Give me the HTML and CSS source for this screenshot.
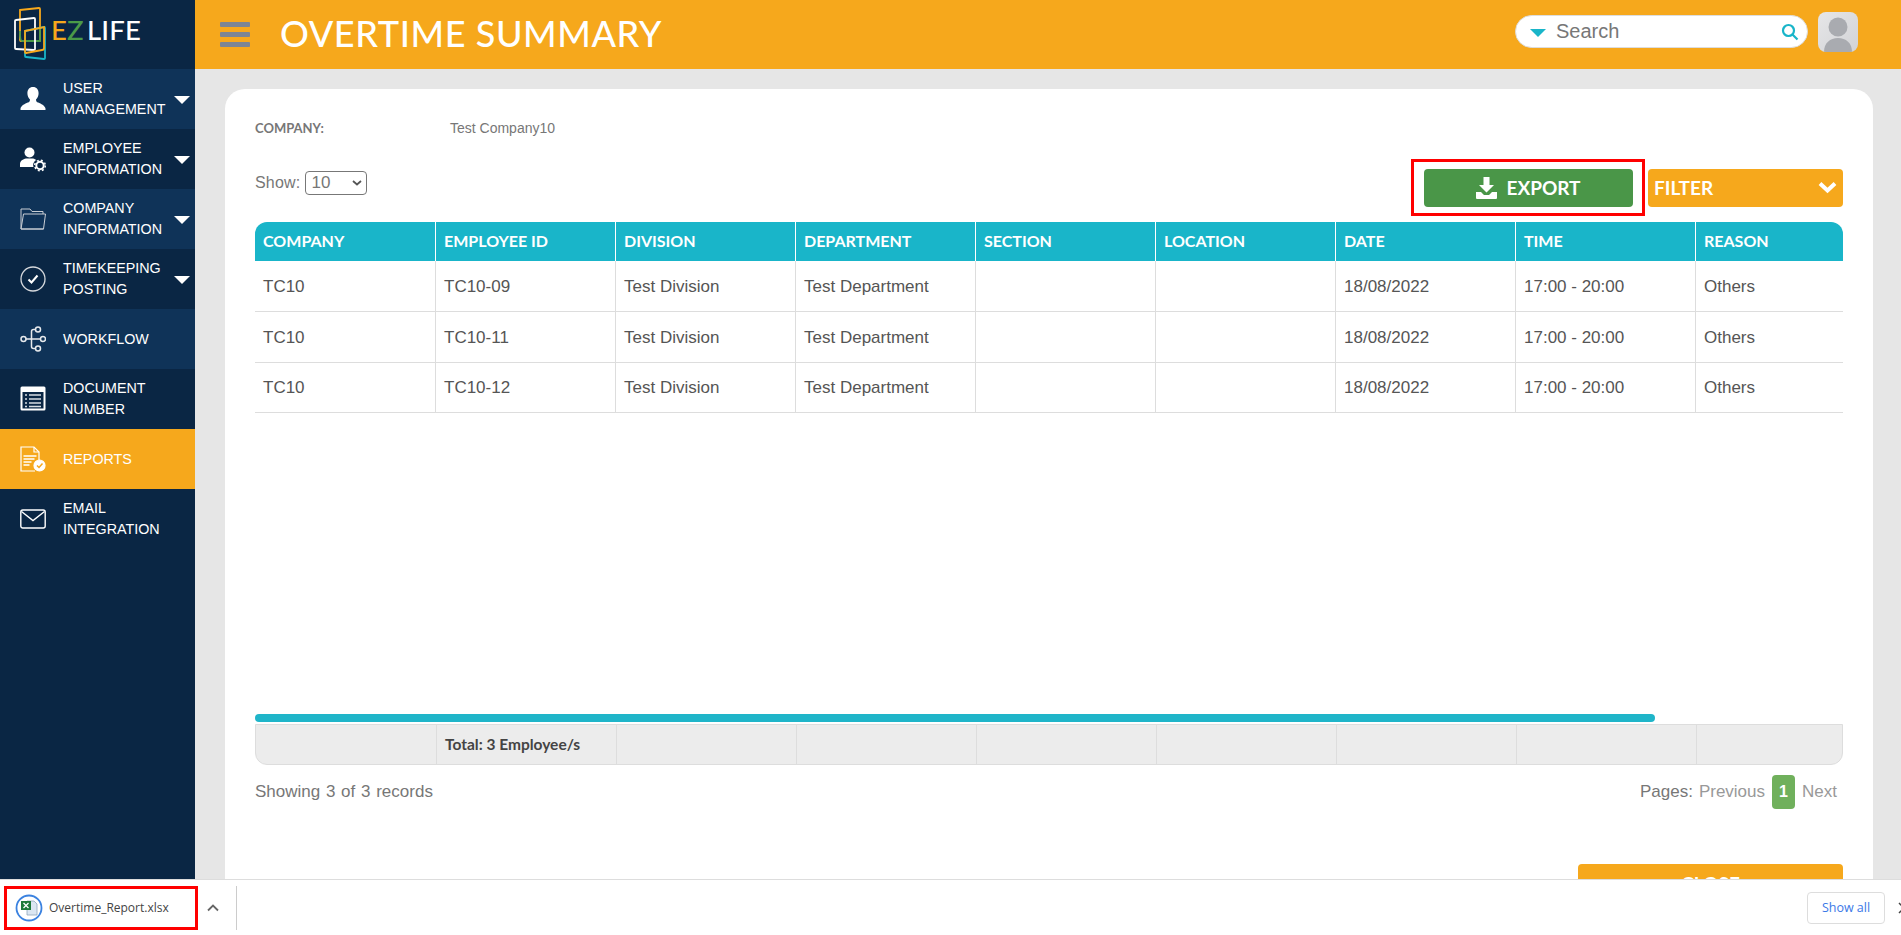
FILE: index.html
```html
<!DOCTYPE html>
<html lang="en">
<head>
  <meta charset="UTF-8" />
  <title>Overtime Summary</title>
  <link rel="stylesheet" href="styles.css">
</head>
<body>
  <div class="app">
    <aside class="sidebar">
      <div class="logo">
        <svg class="logo-mark" width="34" height="56" viewBox="0 0 34 56" fill="none" stroke-width="1.800">
          <path d="M6 3 L25 1 Q26 1 26 2 L26 33 Q26 34 25 34 L7 34 Q6 34 6 33 Z" stroke="#f6a81c"/>
          <path d="M6 24 Q6 34 8 34 L26 34 L26 22" stroke="#4a9a48"/>
          <path d="M11 24 L30 20 Q31 20 31 21 L31 51 Q31 52 30 52 L12 50 Q11 50 11 49 Z" stroke="#19b5c9"/>
          <path d="M1 14 Q1 13 2 13 L20 11 Q21 11 21 12 L21 42 Q21 43 20 43 L2 42 Q1 42 1 41 Z" stroke="#fff"/>
          <path d="M11 24 L30 20 L30 41 Q30 43 28 43 L12 46 Q11 46 11 45 Z" stroke="#f6a81c"/>
        </svg>
        <span class="logo-text"><span class="ez-e">E</span><span class="ez-z">Z</span>LIFE</span>
      </div>
      <nav class="menu">
        <a class="menu-item alt">
          <svg class="menu-icon" viewBox="0 0 26 26" fill="#fff"><path d="M13 1c-3.600 0-5.600 2.700-5.600 6.200 0 2.600 1 4.800 2.600 6.200 0 1.600-.6 2.500-2.200 3.200C4.800 18 1.400 19.500.5 22.500V24h25v-1.500c-.9-3-4.300-4.500-7.300-5.900-1.600-.7-2.200-1.600-2.200-3.200 1.600-1.400 2.600-3.600 2.600-6.200C18.600 3.700 16.600 1 13 1z"/></svg>
          <span class="menu-label">USER MANAGEMENT</span><i class="caret"></i>
        </a>
        <a class="menu-item">
          <svg class="menu-icon" viewBox="0 0 26 26" fill="#fff"><circle cx="9.500" cy="6.500" r="5"/><path d="M0 21v-3c0-3 3-5 6-5.500h7c1.500.3 2.500 1 3 1.500-2.500 1.500-3.500 4.500-2.500 7H1.500Q0 21 0 21z"/><circle cx="20" cy="19.500" r="3.700" fill="none" stroke="#fff" stroke-width="2"/><circle cx="20" cy="19.500" r="5.300" fill="none" stroke="#fff" stroke-width="1.500" stroke-dasharray="2 2.200"/></svg>
          <span class="menu-label">EMPLOYEE INFORMATION</span><i class="caret"></i>
        </a>
        <a class="menu-item alt">
          <svg class="menu-icon" viewBox="0 0 26 26" fill="none" stroke="#c9ced4" stroke-width="1"><path d="M1 23V3h9l2 2.500h11V8"/><path d="M1 23L3.500 8H25.500L23.500 23Z"/><path d="M1 23h22.500"/></svg>
          <span class="menu-label">COMPANY INFORMATION</span><i class="caret"></i>
        </a>
        <a class="menu-item">
          <svg class="menu-icon" viewBox="0 0 26 26" fill="none" stroke="#d5d8dc"><circle cx="13" cy="13" r="12" stroke-width="1.300"/><path d="M8.500 13.500l3 3 6-7" stroke="#fff" stroke-width="2"/></svg>
          <span class="menu-label">TIMEKEEPING POSTING</span><i class="caret"></i>
        </a>
        <a class="menu-item alt">
          <svg class="menu-icon" viewBox="0 0 26 26" fill="none" stroke="#e6e9ec" stroke-width="1.500"><circle cx="3.500" cy="13" r="2.500"/><circle cx="18" cy="3.500" r="2.500"/><circle cx="23" cy="13" r="2.500"/><circle cx="18" cy="22.500" r="2.500"/><path d="M6 13h14.500M15.500 3.500h-2q-2 0-2 2v15q0 2 2 2h2"/></svg>
          <span class="menu-label">WORKFLOW</span>
        </a>
        <a class="menu-item">
          <svg class="menu-icon" viewBox="0 0 26 26"><rect x=".5" y=".5" width="25" height="24" rx="1.500" fill="#fff"/><rect x="2.500" y="6" width="21" height="16.500" fill="#0a2644"/><path d="M5 9h2M9 9h12M5 13h2M9 13h12M5 17h2M9 17h12M5 20.500h2M9 20.500h12" stroke="#d8dde2" stroke-width="1.600"/></svg>
          <span class="menu-label">DOCUMENT NUMBER</span>
        </a>
        <a class="menu-item active">
          <svg class="menu-icon" viewBox="0 0 26 26" fill="none" stroke="#fff" stroke-width="1.200"><path d="M15 25H1V1h13l5 5v8"/><path d="M14 1v5h5"/><path d="M3.500 10h13M3.500 13h11M3.500 16h8M3.500 19h6" stroke-width="1.300"/><circle cx="19.500" cy="19.500" r="5.500" fill="#fff"/><path d="M17 19.500l2 2 3.500-4" stroke="#f6a81c" stroke-width="1.500"/></svg>
          <span class="menu-label">REPORTS</span>
        </a>
        <a class="menu-item">
          <svg class="menu-icon" viewBox="0 0 26 26" fill="none" stroke="#fff" stroke-width="1.400"><rect x=".8" y="4" width="24.400" height="18" rx="2"/><path d="M1.500 5.500L13 14.500L24.500 5.500"/></svg>
          <span class="menu-label">EMAIL INTEGRATION</span>
        </a>
      </nav>
    </aside>

    <div class="content">
      <header class="topbar">
        <div class="burger"><span></span><span></span><span></span></div>
        <h1 class="page-title">OVERTIME SUMMARY</h1>
        <div class="search">
          <i class="search-caret"></i>
          <span class="search-text">Search</span>
          <svg class="search-icon" width="18" height="18" viewBox="0 0 18 18" fill="none" stroke="#19b5c9"><circle cx="7.500" cy="7.500" r="5.500" stroke-width="2.200"/><path d="M11.500 11.500l5 5" stroke-width="2.200"/></svg>
        </div>
        <div class="avatar">
          <svg width="40" height="40" viewBox="0 0 40 40" fill="#a9abb0"><circle cx="20" cy="15" r="9.500"/><path d="M6 40c0-9 6-14 14-14s14 5 14 14z"/></svg>
        </div>
      </header>

      <main class="main">
        <section class="card">
          <div class="company-row">
            <span class="company-label">COMPANY:</span>
            <span class="company-value">Test Company10</span>
          </div>

          <div class="toolbar">
            <div class="show">
              Show:
              <span class="select">10
                <svg width="10" height="6" viewBox="0 0 10 6" fill="none" stroke="#555" stroke-width="1.800"><path d="M1 1l4 3.500L9 1"/></svg>
              </span>
            </div>
            <div class="export-mark">
              <button class="btn-export">
                <svg width="21" height="22" viewBox="0 0 21 22" fill="#fff"><path d="M7.500 0h6v8h4.500l-7.500 7.500L3 8h4.500z"/><path d="M0 15h5l3 3h5l3-3h5v6q0 1-1 1H1q-1 0-1-1z"/></svg>
                EXPORT
              </button>
            </div>
            <button class="btn-filter">
              FILTER
              <svg width="19" height="13" viewBox="0 0 19 13" fill="none" stroke="#fff" stroke-width="4"><path d="M2 2.500l7.500 7 7.500-7"/></svg>
            </button>
          </div>

          <div class="table-wrap">
            <table class="report">
              <thead>
                <tr>
                  <th>COMPANY</th><th>EMPLOYEE ID</th><th>DIVISION</th><th>DEPARTMENT</th><th>SECTION</th><th>LOCATION</th><th>DATE</th><th>TIME</th><th>REASON</th>
                </tr>
              </thead>
              <tbody>
                <tr><td>TC10</td><td>TC10-09</td><td>Test Division</td><td>Test Department</td><td></td><td></td><td>18/08/2022</td><td>17:00 - 20:00</td><td>Others</td></tr>
                <tr><td>TC10</td><td>TC10-11</td><td>Test Division</td><td>Test Department</td><td></td><td></td><td>18/08/2022</td><td>17:00 - 20:00</td><td>Others</td></tr>
                <tr class="last-row"><td>TC10</td><td>TC10-12</td><td>Test Division</td><td>Test Department</td><td></td><td></td><td>18/08/2022</td><td>17:00 - 20:00</td><td>Others</td></tr>
              </tbody>
            </table>
          </div>

          <div class="scrollbar"></div>

          <div class="totals">
            <div></div><div class="total-text">Total: 3 Employee/s</div><div></div><div></div><div></div><div></div><div></div><div></div><div></div>
          </div>

          <div class="pager-row">
            <span class="records">Showing 3 of 3 records</span>
            <div class="pager">
              <span class="pages">Pages:</span>
              <span class="page-link">Previous</span>
              <span class="page-num">1</span>
              <span class="page-link">Next</span>
            </div>
          </div>

          <div class="close-row"><button class="btn-close">CLOSE</button></div>
        </section>
      </main>
    </div>
  </div>

  <footer class="downloads">
    <div class="download-mark">
      <span class="file-icon">
        <svg width="28" height="28" viewBox="0 0 28 28" fill="none"><circle cx="14" cy="14" r="12.500" stroke="#3b82e0" stroke-width="1.800"/><path d="M12 7h7l3 3v11H12z" fill="#dbe6f2" stroke="#8fa6bd" stroke-width=".8"/><rect x="6" y="7" width="10" height="9" fill="#1e7a3a"/><path d="M8.500 9l5 5M13.500 9l-5 5" stroke="#fff" stroke-width="1.300"/></svg>
      </span>
      <span class="file-name">Overtime_Report.xlsx</span>
    </div>
    <svg class="chevron" width="12" height="8" viewBox="0 0 12 8" fill="none" stroke="#666" stroke-width="1.800"><path d="M1 6.500l5-5 5 5"/></svg>
    <span class="divider"></span>
    <span class="spacer"></span>
    <button class="show-all">Show all</button>
    <svg class="close-x" width="12" height="12" viewBox="0 0 12 12" fill="none" stroke="#444" stroke-width="1.500"><path d="M1 1l10 10M11 1L1 11"/></svg>
  </footer>
</body>
</html>
```

FILE: styles.css
```css
* {
  margin: 0;
  padding: 0;
  box-sizing: border-box;
}

html, body {
  height: 100%;
  overflow: hidden;
}

body {
  display: flex;
  flex-direction: column;
  font-family: "Liberation Sans", Arial, sans-serif;
  color: #555;
  background-color: #fff;
}

button {
  border: none;
  cursor: pointer;
}

.app {
  flex: 1;
  min-height: 0;
  display: flex;
  overflow: hidden;
}

/* sidebar */
.sidebar {
  width: 195px;
  flex-shrink: 0;
  background-color: #0a2644;
}

.logo {
  height: 69px;
  display: flex;
  align-items: center;
  padding-left: 14px;
}

.logo-text {
  font-family: Lato, sans-serif;
  font-size: 27.5px;
  font-weight: 500;
  color: #fff;
  margin-left: 3px;
  margin-top: -10px;
  letter-spacing: .2px;
}

.ez-e { color: #f6a81c; }
.ez-z { color: #4a9a48; margin-right: 3px; }

.menu-item {
  height: 60px;
  display: flex;
  align-items: center;
  padding-left: 20px;
  position: relative;
  color: #fff;
  font-size: 14.3px;
  line-height: 21px;
  background-color: #0a2644;
}

.menu-item.alt { background-color: #0f3358; }
.menu-item.active { background-color: #f6a81c; }

.menu-icon {
  width: 26px;
  height: 26px;
  flex-shrink: 0;
  margin-right: 17px;
}

.menu-label {
  width: 106px;
}

.caret {
  position: absolute;
  right: 5px;
  top: 27px;
  border-left: 8px solid transparent;
  border-right: 8px solid transparent;
  border-top: 8px solid #fff;
}

/* top bar */
.content {
  flex: 1;
  min-width: 0;
  display: flex;
  flex-direction: column;
}

.topbar {
  height: 69px;
  flex-shrink: 0;
  background-color: #f6a81c;
  display: flex;
  align-items: center;
  padding: 0 0 5px 25px;
}

.burger {
  width: 30px;
  margin-top: 5px;
  display: flex;
  flex-direction: column;
  gap: 5px;
}

.burger span {
  height: 5px;
  border-radius: 1px;
  background-color: #7c8594;
}

.page-title {
  font-family: Lato, sans-serif;
  font-size: 36px;
  font-weight: 500;
  color: #fff;
  margin: 2px 0 0 30px;
  letter-spacing: .6px;
}

.search {
  margin: -1px 0 0 auto;
  width: 293px;
  height: 33px;
  border-radius: 17px;
  background-color: #fff;
  border: 1px solid #ddd;
  display: flex;
  align-items: center;
  padding: 0 8px 0 14px;
}

.search-caret {
  border-left: 8px solid transparent;
  border-right: 8px solid transparent;
  border-top: 8px solid #19b5c9;
  margin-top: 2px;
}

.search-text {
  font-size: 20px;
  color: #777;
  margin-left: 10px;
}

.search-icon {
  margin-left: auto;
}

.avatar {
  width: 40px;
  height: 40px;
  margin: 0 43px 0 10px;
  border-radius: 8px;
  overflow: hidden;
  background: linear-gradient(135deg, #e6e6e8, #d2d3d6);
}

.avatar svg {
  display: block;
}

/* card */
.main {
  flex: 1;
  min-height: 0;
  overflow: hidden;
  background-color: #e6e6e6;
  padding: 20px 28px 0 30px;
}

.card {
  background-color: #fff;
  border-radius: 20px 20px 0 0;
  padding: 30px 30px 0;
  min-height: 900px;
}

.company-row {
  display: flex;
  align-items: center;
  height: 18px;
  color: #777;
}

.company-label {
  width: 195px;
  font-family: Lato, sans-serif;
  font-size: 13px;
  font-weight: 700;
}

.company-value {
  font-size: 14px;
}

.toolbar {
  display: flex;
  align-items: flex-start;
  margin-top: 22px;
}

.show {
  font-size: 16px;
  letter-spacing: .2px;
  color: #777;
  display: flex;
  align-items: center;
  gap: 5px;
  margin-top: 12px;
}

.select {
  width: 62px;
  height: 24px;
  border: 1px solid #777;
  border-radius: 4px;
  font-size: 17px;
  display: flex;
  align-items: center;
  justify-content: space-between;
  padding: 0 4px 0 5px;
}

.export-mark {
  margin-left: auto;
  border: 3px solid #f00;
  padding: 7px 9px 6px 10px;
}

.btn-export {
  width: 209px;
  height: 38px;
  padding-bottom: 1px;
  border-radius: 4px;
  background-color: #4a9648;
  color: #fff;
  font-family: Lato, sans-serif;
  font-size: 19px;
  font-weight: 700;
  display: flex;
  align-items: center;
  justify-content: center;
  gap: 9px;
}

.btn-filter {
  width: 195px;
  height: 38px;
  margin: 10px 0 0 3px;
  border-radius: 4px;
  background-color: #f6a81c;
  color: #fff;
  font-family: Lato, sans-serif;
  font-size: 19px;
  font-weight: 700;
  display: flex;
  align-items: center;
  justify-content: space-between;
  padding: 0 6px 1px;
}

/* table */
.table-wrap {
  height: 492px;
  margin-top: 6px;
}

.report {
  width: 100%;
  table-layout: fixed;
  border-collapse: separate;
  border-spacing: 0;
}

.report th {
  height: 39px;
  width: 180px;
  background-color: #19b5c9;
  color: #fff;
  font-family: Lato, sans-serif;
  font-size: 16px;
  font-weight: 700;
  text-align: left;
  padding: 0 0 2px 8px;
  border-left: 1px solid #fff;
}

.report th:first-child {
  border-left: none;
  border-top-left-radius: 12px;
}

.report th:last-child {
  width: 148px;
  border-top-right-radius: 12px;
}

.report td {
  height: 51px;
  font-size: 17px;
  color: #555;
  padding: 1px 0 0 8px;
  border-left: 1px solid #ddd;
  border-bottom: 1px solid #ddd;
}

.report td:first-child {
  border-left: none;
}

.report .last-row td {
  height: 50px;
  padding-top: 0;
}

.scrollbar {
  width: 1400px;
  height: 8px;
  border-radius: 4px;
  background-color: #1fb5c9;
}

.totals {
  display: grid;
  grid-template-columns: repeat(8, 180px) 148px;
  height: 41px;
  margin-top: 2px;
  background-color: #ececec;
  border: 1px solid #ddd;
  border-radius: 0 0 12px 12px;
}

.totals div + div {
  border-left: 1px solid #ddd;
}

.total-text {
  font-family: Lato, sans-serif;
  font-size: 15.5px;
  font-weight: 700;
  color: #444;
  padding: 10px 0 0 8px;
}

.pager-row {
  display: flex;
  justify-content: space-between;
  align-items: center;
  height: 34px;
  margin-top: 10px;
  font-size: 17px;
  color: #777;
}

.records {
  word-spacing: 1px;
}

.pager {
  display: flex;
  align-items: center;
  padding-right: 6px;
}

.pages {
  margin-right: 6px;
}

.page-link {
  color: #999;
}

.page-num {
  width: 23px;
  height: 34px;
  margin: 0 7px;
  border-radius: 4px;
  background-color: #70b05c;
  color: #fff;
  font-weight: 700;
  font-size: 16px;
  display: flex;
  align-items: center;
  justify-content: center;
}

.close-row {
  display: flex;
  justify-content: flex-end;
  margin-top: 55px;
}

.btn-close {
  width: 265px;
  height: 38px;
  border-radius: 4px;
  background-color: #f6a81c;
  color: #fff;
  font-family: Lato, sans-serif;
  font-size: 19px;
  font-weight: 700;
}

/* download bar */
.downloads {
  height: 56px;
  flex-shrink: 0;
  background-color: #fff;
  border-top: 1px solid #ddd;
  display: flex;
  align-items: center;
  padding-left: 4px;
  overflow: hidden;
}

.download-mark {
  width: 194px;
  height: 44px;
  border: 3px solid #f00;
  display: flex;
  align-items: center;
  padding-left: 8px;
  gap: 6px;
}

.file-icon {
  height: 28px;
}

.file-name {
  font-family: "Open Sans", sans-serif;
  font-size: 12px;
  color: #444;
}

.chevron {
  margin-left: 9px;
}

.divider {
  width: 1px;
  height: 44px;
  margin-left: 17px;
  background-color: #ccc;
}

.spacer {
  flex: 1;
}

.show-all {
  width: 78px;
  height: 32px;
  border: 1px solid #ddd;
  border-radius: 4px;
  background-color: #fff;
  color: #3b78e7;
  font-family: "Open Sans", sans-serif;
  font-size: 12.5px;
}

.close-x {
  flex-shrink: 0;
  margin: 0 -9px 0 13px;
}
```
